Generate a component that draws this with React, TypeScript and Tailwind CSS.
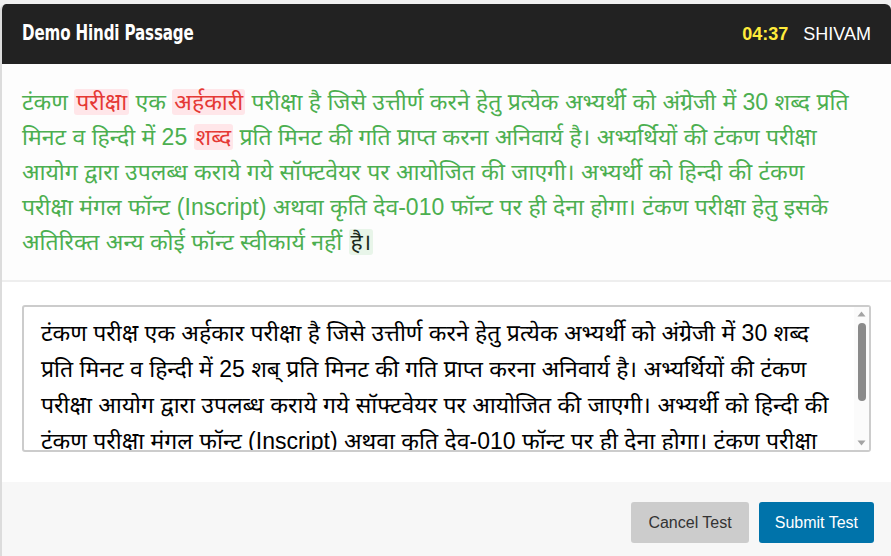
import { useState } from "react";

const passage: { w: string; kind?: "wrong" | "current" }[][] = [
  [
    { w: "टंकण" },
    { w: "परीक्षा", kind: "wrong" },
    { w: "एक" },
    { w: "अर्हकारी", kind: "wrong" },
    { w: "परीक्षा है जिसे उत्तीर्ण करने हेतु प्रत्येक अभ्यर्थी को अंग्रेजी में 30 शब्द प्रति" },
  ],
  [
    { w: "मिनट व हिन्दी में 25" },
    { w: "शब्द", kind: "wrong" },
    { w: "प्रति मिनट की गति प्राप्त करना अनिवार्य है। अभ्यर्थियों की टंकण परीक्षा" },
  ],
  [{ w: "आयोग द्वारा उपलब्ध कराये गये सॉफ्टवेयर पर आयोजित की जाएगी। अभ्यर्थी को हिन्दी की टंकण" }],
  [{ w: "परीक्षा मंगल फॉन्ट (Inscript) अथवा कृति देव-010 फॉन्ट पर ही देना होगा। टंकण परीक्षा हेतु इसके" }],
  [{ w: "अतिरिक्त अन्य कोई फॉन्ट स्वीकार्य नहीं" }, { w: "है।", kind: "current" }],
];

const typed =
  "टंकण परीक्ष एक अर्हकार परीक्षा है जिसे उत्तीर्ण करने हेतु प्रत्येक अभ्यर्थी को अंग्रेजी में 30 शब्द प्रति मिनट व हिन्दी में 25 शब् प्रति मिनट की गति प्राप्त करना अनिवार्य है। अभ्यर्थियों की टंकण परीक्षा आयोग द्वारा उपलब्ध कराये गये सॉफ्टवेयर पर आयोजित की जाएगी। अभ्यर्थी को हिन्दी की टंकण परीक्षा मंगल फॉन्ट (Inscript) अथवा कृति देव-010 फॉन्ट पर ही देना होगा। टंकण परीक्षा हेतु इसके अतिरिक्त अन्य कोई फॉन्ट स्वीकार्य नहीं";

export default function App() {
  const [text, setText] = useState(typed);

  return (
    <div className="min-h-[556px] bg-[#f0f0f0] pt-[4px] font-['Liberation_Sans','Noto_Sans',sans-serif]">
      <div className="overflow-hidden rounded-t-[6px] border-l-2 border-[#dcdcdc] bg-white">
        {/* Header */}
        <div className="flex h-[60px] items-center justify-between bg-[#222222] px-[20px]">
          <h1 className="origin-left scale-x-[0.72] whitespace-nowrap font-['DejaVu_Sans',sans-serif] text-[21px] font-bold tracking-[-0.2px] text-white">
            Demo Hindi Passage
          </h1>
          <div className="flex items-center gap-[15px] text-[18px]">
            <span className="font-bold text-[#ffeb3b]">04:37</span>
            <span className="text-white">SHIVAM</span>
          </div>
        </div>

        {/* Passage */}
        <div className="border-b-2 border-[#eeeeee] bg-[#fdfdfd] px-[20px] pt-[21px] pb-[20px]">
          <p className="text-[23px] leading-[35px] text-[#4caf50]">
            {passage.map((line, i) => (
              <span key={i} className="block whitespace-nowrap">
                {line.map((seg, j) => (
                  <span key={j}>
                    {j > 0 && " "}
                    {seg.kind === "wrong" ? (
                      <span className="rounded-[3px] bg-[#ffe6e9] px-[2px] text-[#e53935]">{seg.w}</span>
                    ) : seg.kind === "current" ? (
                      <span className="rounded-[3px] bg-[#e8f5e9] px-[2px] text-[#1b2a1c]">{seg.w}</span>
                    ) : (
                      seg.w
                    )}
                  </span>
                ))}
              </span>
            ))}
          </p>
        </div>

        {/* Typing area */}
        <div className="bg-white px-[20px] pt-[23px] pb-[30px]">
          <div className="relative">
            <textarea
              value={text}
              onChange={(e) => setText(e.target.value)}
              spellCheck={false}
              className="block h-[147px] w-full resize-none overflow-hidden rounded-[3px] border-2 border-[#cccccc] bg-white pl-[17px] pr-[34px] pt-[8px] text-[23px] leading-[36px] text-black outline-none"
            />
            {/* scrollbar */}
            <div className="pointer-events-none absolute top-[2px] right-[2px] bottom-[2px] flex w-[15px] flex-col items-center bg-[#fbfbfb]">
              <svg width="9" height="6" viewBox="0 0 9 6" className="mt-[4px]">
                <path d="M4.5 0.5 L8.5 5.5 L0.5 5.5 Z" fill="#a3a3a3" />
              </svg>
              <div className="mt-[6px] h-[78px] w-[8px] rounded-[4px] bg-[#8a8a8a]" />
              <div className="flex-1" />
              <svg width="9" height="6" viewBox="0 0 9 6" className="mb-[4px]">
                <path d="M0.5 0.5 L8.5 0.5 L4.5 5.5 Z" fill="#a3a3a3" />
              </svg>
            </div>
          </div>
        </div>

        {/* Footer */}
        <div className="flex h-[74px] items-start justify-end gap-[10px] bg-[#f7f7f7] px-[17px] pt-[20px]">
          <button
            type="button"
            className="h-[41px] rounded-[3px] bg-[#cccccc] px-[17px] text-[16px] text-[#333333]"
          >
            Cancel Test
          </button>
          <button
            type="button"
            className="h-[41px] rounded-[3px] bg-[#0073aa] px-[16px] text-[16px] text-white"
          >
            Submit Test
          </button>
        </div>
      </div>
    </div>
  );
}
